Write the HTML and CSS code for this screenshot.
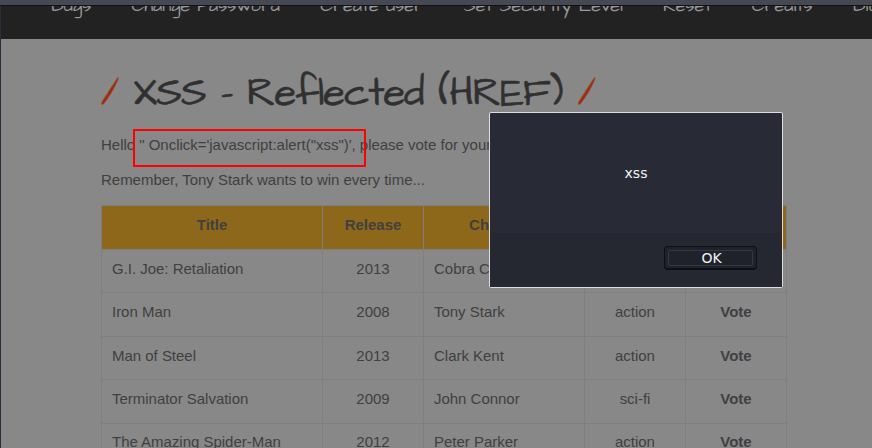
FILE: index.html
```html
<!DOCTYPE html>
<html lang="en">
<head>
<meta charset="utf-8">
<title>XSS - Reflected (HREF)</title>
<link rel="stylesheet" href="styles.css">
</head>
<body>
<div class="chrome"></div>
<div class="viewport">
<nav class="menu">
<a>Bugs</a><a>Change Password</a><a>Create user</a><a>Set Security Level</a><a>Reset</a><a>Credits</a><a>Blog</a>
</nav>
<main class="content">
<h1><span class="slash">/</span> XSS - Reflected (HREF) <span class="slash">/</span></h1>
<p>Hello <span class="payload">" Onclick='javascript:alert("xss")',<i class="mark"></i></span> please vote for your favorite movie.</p>
<p>Remember, Tony Stark wants to win every time...</p>
<table>
<colgroup><col class="c-title"><col class="c-small"><col class="c-char"><col class="c-small"><col class="c-small"></colgroup>
<thead><tr><th>Title</th><th>Release</th><th>Character</th><th>Genre</th><th>Vote</th></tr></thead>
<tbody>
<tr><td>G.I. Joe: Retaliation</td><td>2013</td><td>Cobra Commander</td><td>action</td><td>Vote</td></tr>
<tr><td>Iron Man</td><td>2008</td><td>Tony Stark</td><td>action</td><td>Vote</td></tr>
<tr><td>Man of Steel</td><td>2013</td><td>Clark Kent</td><td>action</td><td>Vote</td></tr>
<tr><td>Terminator Salvation</td><td>2009</td><td>John Connor</td><td>sci-fi</td><td>Vote</td></tr>
<tr><td>The Amazing Spider-Man</td><td>2012</td><td>Peter Parker</td><td>action</td><td>Vote</td></tr>
</tbody>
</table>
</main>
</div>
<div class="dialog">
<div class="message">xss</div>
<div class="actions"><button><span>OK</span></button></div>
</div>
</body>
</html>
```
FILE: styles.css
```css
* { box-sizing: border-box; }
body {
  margin: 0;
  width: 872px;
  height: 448px;
  overflow: hidden;
  background: #888;
  font: 15px/20px "Liberation Sans", Arial, sans-serif;
  color: #404040;
}
.chrome {
  height: 6px;
  background: #464852;
  border-bottom: 1px solid #111217;
}
.viewport {
  height: 442px;
  overflow: hidden;
  border-left: 1px solid #2b2d38;
}
.menu {
  display: flex;
  align-items: flex-end;
  gap: 40.2px;
  height: 33px;
  padding: 0 0 18px 50px;
  overflow: hidden;
  background: #222;
  color: #999;
  font: 18px/30px "Architects Daughter", Lato, sans-serif;
  white-space: nowrap;
}
.content {
  width: 684px;
  margin-left: 100px;
  padding-top: 29px;
}
h1 {
  margin: 0;
  height: 50px;
  font: 400 40px/52px "Architects Daughter", Lato, sans-serif;
  letter-spacing: -1px;
  color: #303030;
  -webkit-text-stroke: .5px;
  white-space: nowrap;
}
.slash { color: #9c300e; }
p { margin: 0 0 15px; white-space: nowrap; letter-spacing: -.02px; }
h1 + p { margin-top: 17px; }
.payload { position: relative; }
.mark {
  position: absolute;
  left: -6px;
  top: -7px;
  width: 233px;
  height: 38px;
  border: 2px solid #f00;
  border-radius: 1px;
}
table {
  width: 685px;
  table-layout: fixed;
  border-collapse: collapse;
  letter-spacing: -.02px;
}
.c-title { width: 221px; }
.c-small { width: 101px; }
.c-char { width: 161px; }
th, td {
  height: 43.4px;
  padding: 0 10px 4.6px;
  border: 1px solid #7f7f7f;
  text-align: center;
  white-space: nowrap;
}
th { background: #8d681a; height: 44px; padding-bottom: 6px; }
td:nth-child(1), td:nth-child(3) { text-align: left; }
td:last-child { font-weight: bold; }
.dialog {
  position: absolute;
  left: 489px;
  top: 112px;
  width: 294px;
  height: 176px;
  display: flex;
  flex-direction: column;
  border: 1px solid #ddd;
  border-radius: 2px;
  background: #282a35;
  color: #f4f4f4;
  font: 14px/20px "DejaVu Sans", sans-serif;
}
.message {
  height: 120px;
  display: flex;
  align-items: center;
  justify-content: center;
}
.actions {
  flex: 1;
  padding: 12px 25px 0 0;
  display: flex;
  justify-content: flex-end;
  align-items: flex-start;
  background: #262831;
  border-top: 1px solid #242630;
}
button {
  width: 93px;
  height: 24px;
  padding: 3px;
  border: 1px solid #0e0f14;
  border-bottom-width: 2px;
  border-radius: 4px;
  background: #20222b;
  color: inherit;
  font: inherit;
}
button span {
  display: block;
  height: 16px;
  padding-left: 2px;
  border: 1px solid #353741;
  border-radius: 2px;
  line-height: 14px;
}
```
